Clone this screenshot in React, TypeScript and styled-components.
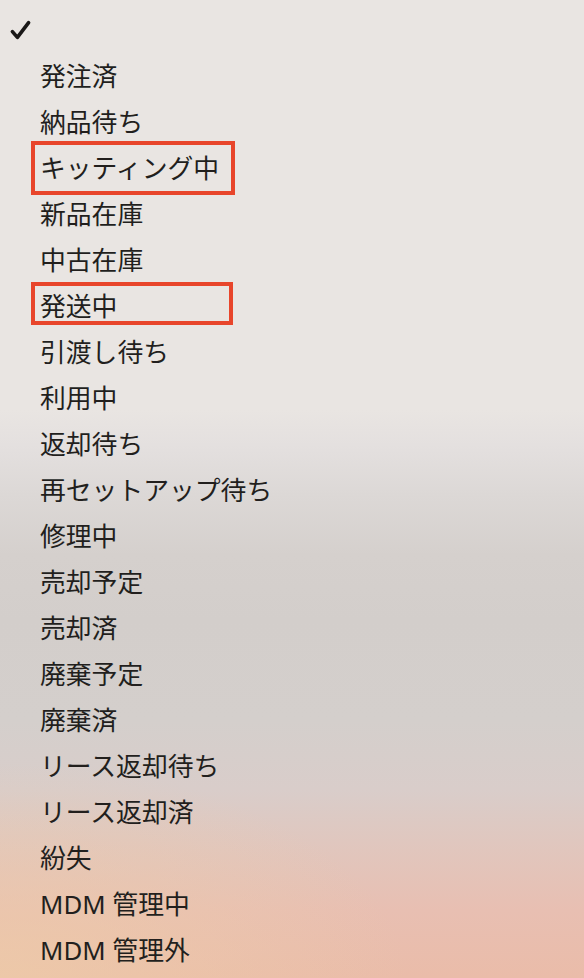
import React from "react";
import styled, { createGlobalStyle } from "styled-components";

const GlobalStyle = createGlobalStyle`
  html, body {
    margin: 0;
    padding: 0;
    min-height: 978px;
  }
  body {
    background:
      radial-gradient(ellipse 70% 22% at 0% 100%, rgba(238, 204, 168, 0.75), rgba(238, 204, 168, 0) 100%),
      linear-gradient(
        180deg,
        #e9e5e2 0px,
        #e9e5e2 410px,
        #e4e0df 445px,
        #dcd8d6 495px,
        #d5d0cd 555px,
        #d3cecb 620px,
        #d4cfcc 720px,
        #d9cdca 790px,
        #e1c6bd 850px,
        #e8bfb2 910px,
        #eabca9 978px
      );
    background-repeat: no-repeat;
    background-size: 100% 978px;
    font-family: "Noto Sans", "Noto Sans CJK JP", sans-serif;
    color: #221f1d;
  }
`;

const Menu = styled.ul`
  list-style: none;
  margin: 0;
  padding: 8px 0 0 0;
  width: 584px;
  display: flex;
  flex-direction: column;
`;

const Row = styled.li<{
  $boxTop?: number;
  $boxHeight?: number;
  $boxWidth?: number;
}>`
  position: relative;
  height: 46px;
  display: flex;
  align-items: center;
  padding-left: 40px;
  font-size: 25.8px;
  line-height: 1;
  white-space: nowrap;

  ${({ $boxTop, $boxHeight, $boxWidth }) =>
    $boxHeight
      ? `
    &::after {
      content: "";
      position: absolute;
      left: 31px;
      top: ${$boxTop}px;
      width: ${$boxWidth}px;
      height: ${$boxHeight}px;
      box-sizing: border-box;
      border: 4px solid #e8452b;
      pointer-events: none;
    }
  `
      : ""}
`;

const Check = styled.svg`
  position: absolute;
  left: 9px;
  top: 12px;
  width: 24px;
  height: 22px;
`;

type Item = {
  label: string;
  mark?: { top: number; height: number; width: number };
};

const items: Item[] = [
  { label: "発注済" },
  { label: "納品待ち" },
  { label: "キッティング中", mark: { top: -5, height: 54, width: 204 } },
  { label: "新品在庫" },
  { label: "中古在庫" },
  { label: "発送中", mark: { top: -2, height: 43, width: 202 } },
  { label: "引渡し待ち" },
  { label: "利用中" },
  { label: "返却待ち" },
  { label: "再セットアップ待ち" },
  { label: "修理中" },
  { label: "売却予定" },
  { label: "売却済" },
  { label: "廃棄予定" },
  { label: "廃棄済" },
  { label: "リース返却待ち" },
  { label: "リース返却済" },
  { label: "紛失" },
  { label: "MDM 管理中" },
  { label: "MDM 管理外" },
];

export default function App() {
  return (
    <>
      <GlobalStyle />
      <Menu>
        <Row aria-selected="true">
          <Check viewBox="0 0 24 22">
            <path
              d="M3.4 11.6 L8.4 17.4 L19.6 2.6"
              fill="none"
              stroke="#1a1817"
              strokeWidth="3.6"
              strokeLinecap="round"
              strokeLinejoin="round"
            />
          </Check>
        </Row>
        {items.map((it) => (
          <Row
            key={it.label}
            $boxTop={it.mark?.top}
            $boxHeight={it.mark?.height}
            $boxWidth={it.mark?.width}
          >
            {it.label}
          </Row>
        ))}
      </Menu>
    </>
  );
}
